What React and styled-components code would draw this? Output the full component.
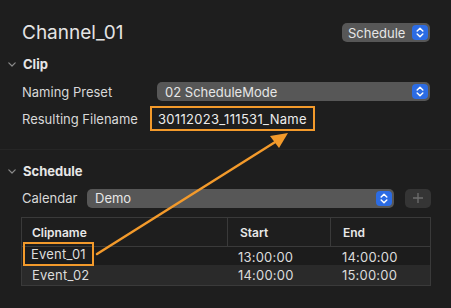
import React from 'react';
import styled, { createGlobalStyle } from 'styled-components';

const Global = createGlobalStyle`
  html, body {
    margin: 0;
    padding: 0;
    background: #1e1e1e;
  }
  body {
    font-family: Inter, 'Liberation Sans', sans-serif;
    -webkit-font-smoothing: antialiased;
  }
`;

const Page = styled.div`
  position: relative;
  width: 451px;
  height: 308px;
  overflow: hidden;
  background: #1e1e1e;
  color: #dedede;
`;

const TopPart = styled.div`
  padding: 23px 21px 0 22px;
  height: 126px;
  border-bottom: 1px solid #262626;
`;

const Header = styled.div`
  display: flex;
  align-items: center;
  justify-content: space-between;
  height: 19px;
`;

const Title = styled.h1`
  margin: 0;
  font-size: 19px;
  font-weight: 400;
  color: #e4e4e4;
`;

const SectionHead = styled.div`
  display: flex;
  align-items: center;
  gap: 7px;
  margin-left: -14px;
  height: 14px;
  margin-top: ${p => p.$top}px;
  font-size: 13px;
  font-weight: 700;
  color: #e6e6e6;
`;

const FormRow = styled.div`
  display: grid;
  grid-template-columns: ${p => p.$label}px 1fr;
  align-items: center;
  height: ${p => p.$h}px;
  margin-top: ${p => p.$top}px;
`;

const Label = styled.span`
  font-size: 13px;
  color: #d8d8d8;
`;

const Popup = styled.div`
  display: flex;
  align-items: center;
  justify-content: space-between;
  height: 19px;
  box-sizing: border-box;
  padding: 0 2px 0 ${p => p.$pad}px;
  background: #575757;
  border-radius: 5px;
  font-size: 13px;
  color: #e6e6e6;
  width: ${p => (p.$w ? `${p.$w}px` : 'auto')};
  flex: ${p => (p.$grow ? 1 : 'none')};
`;

const Stepper = styled.span`
  display: flex;
  align-items: center;
  justify-content: center;
  width: 16px;
  height: 15px;
  border-radius: 4px;
  background: #2c6ce4;
  margin-left: 6px;
`;

const Highlight = styled.div`
  display: inline-flex;
  align-items: center;
  box-sizing: border-box;
  height: 25px;
  padding: 0 6px;
  border: 2.5px solid #f39a2b;
  font-size: 13px;
  letter-spacing: 0.3px;
  color: #ececec;
  justify-self: start;
`;

const BottomPart = styled.div`
  padding: 0 20px 0 22px;
`;

const CalendarRow = styled.div`
  display: flex;
  align-items: center;
  margin-top: 10px;
  height: 20px;
`;

const CalLabel = styled(Label)`
  width: 65px;
  flex: none;
`;

const PlusButton = styled.div`
  flex: none;
  width: 26px;
  height: 19px;
  margin-left: 11px;
  border-radius: 5px;
  background: #353535;
  display: flex;
  align-items: center;
  justify-content: center;
`;

const Table = styled.div`
  margin-top: 9px;
  margin-left: -1px;
  border: 1px solid #3a3a3a;
  font-size: 13px;
`;

const Row = styled.div`
  display: grid;
  grid-template-columns: 205px 103px 1fr;
  align-items: center;
  height: ${p => p.$h}px;
  background: ${p => p.$bg};
  border-bottom: ${p => (p.$line ? '1px solid #3a3a3a' : 'none')};
`;

const Cell = styled.div`
  height: 100%;
  display: flex;
  align-items: center;
  padding-left: ${p => p.$pad}px;
  border-left: ${p => (p.$sep ? '1px solid #3a3a3a' : 'none')};
  font-weight: ${p => (p.$head ? 600 : 400)};
  color: ${p => (p.$head ? '#e8e8e8' : '#dcdcdc')};
  font-size: ${p => (p.$head ? 12 : 13)}px;
  letter-spacing: ${p => (p.$head ? 0 : 0.2)}px;
`;

const NameBox = styled.span`
  display: inline-flex;
  align-items: center;
  box-sizing: border-box;
  height: 24px;
  margin-left: -9px;
  margin-top: -5px;
  padding: 0 6px;
  border: 2.5px solid #f39a2b;
`;

const Overlay = styled.svg`
  position: absolute;
  left: 0;
  top: 0;
  pointer-events: none;
`;

const StepIcon = () => (
  <svg width="8" height="11" viewBox="0 0 8 11">
    <path d="M1.2 4 L4 1.3 L6.8 4 M1.2 7 L4 9.7 L6.8 7" fill="none" stroke="#fff" strokeWidth="1.5" strokeLinecap="round" strokeLinejoin="round" />
  </svg>
);

const Chevron = () => (
  <svg width="8" height="5" viewBox="0 0 8 5">
    <path d="M0.8 0.8 L4 4 L7.2 0.8" fill="none" stroke="#8a8a8a" strokeWidth="1.2" strokeLinecap="round" strokeLinejoin="round" />
  </svg>
);

const events = [
  { name: 'Event_01', start: '13:00:00', end: '14:00:00', bg: '#1c1c1c' },
  { name: 'Event_02', start: '14:00:00', end: '15:00:00', bg: '#2a2a2a' },
];

export default function App() {
  return (
    <Page>
      <Global />
      <TopPart>
        <Header>
          <Title>Channel_01</Title>
          <Popup $pad={6} $w={88}>
            Schedule
            <Stepper><StepIcon /></Stepper>
          </Popup>
        </Header>
        <SectionHead $top={15}>
          <Chevron />
          Clip
        </SectionHead>
        <FormRow $label={135} $h={19} $top={11}>
          <Label>Naming Preset</Label>
          <Popup $pad={8}>
            02 ScheduleMode
            <Stepper><StepIcon /></Stepper>
          </Popup>
        </FormRow>
        <FormRow $label={128} $h={25} $top={5}>
          <Label>Resulting Filename</Label>
          <Highlight>30112023_111531_Name</Highlight>
        </FormRow>
      </TopPart>
      <BottomPart>
        <SectionHead $top={14}>
          <Chevron />
          Schedule
        </SectionHead>
        <CalendarRow>
          <CalLabel>Calendar</CalLabel>
          <Popup $pad={8} $grow>
            Demo
            <Stepper><StepIcon /></Stepper>
          </Popup>
          <PlusButton>
            <svg width="12" height="12" viewBox="0 0 12 12">
              <path d="M6 1 V11 M1 6 H11" stroke="#6e6e6e" strokeWidth="1.3" />
            </svg>
          </PlusButton>
        </CalendarRow>
        <Table>
          <Row $h={28} $bg="#1e1e1e" $line>
            <Cell $head $pad={10}>Clipname</Cell>
            <Cell $head $sep $pad={12}>Start</Cell>
            <Cell $head $sep $pad={12}>End</Cell>
          </Row>
          {events.map((e, i) => (
            <Row key={e.name} $h={i === 0 ? 18 : 20} $bg={e.bg}>
              <Cell $pad={10}>
                {i === 0 ? <NameBox>{e.name}</NameBox> : e.name}
              </Cell>
              <Cell $pad={11}>{e.start}</Cell>
              <Cell $pad={12}>{e.end}</Cell>
            </Row>
          ))}
        </Table>
      </BottomPart>
      <Overlay width="451" height="308" viewBox="0 0 451 308">
        <line x1="97" y1="254" x2="280" y2="139" stroke="#f39a2b" strokeWidth="2.5" strokeLinecap="round" />
        <polygon points="288,133 270,136 279,148" fill="#f39a2b" />
      </Overlay>
    </Page>
  );
}
